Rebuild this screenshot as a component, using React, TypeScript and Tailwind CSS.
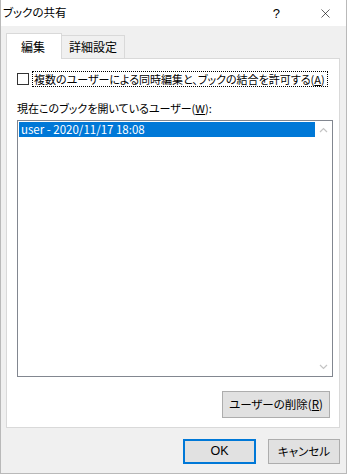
import { X } from "lucide-react";

const font = "font-['Meiryo_UI','Noto_Sans_CJK_JP',sans-serif] [font-feature-settings:'palt']";

function Chevron({ up }: { up?: boolean }) {
  return (
    <svg width="9" height="6" viewBox="0 0 9 6" className="block">
      <path
        d={up ? "M1 5 L4.5 1.5 L8 5" : "M1 1 L4.5 4.5 L8 1"}
        fill="none"
        stroke="#c4c4c4"
        strokeWidth="1.2"
      />
    </svg>
  );
}

export default function App() {
  return (
    <div className={`${font} w-[347px] h-[474px] bg-[#f0f0f0] border border-t-0 border-[#b9b9b9] text-[11px] leading-none text-black flex flex-col`}>
      {/* title bar */}
      <div className="h-[26px] bg-white flex items-center shrink-0">
        <span className="pl-[2px] text-[11.5px]">ブックの共有</span>
        <span className="ml-auto mr-[38px] text-[13px] font-['Liberation_Sans',sans-serif]">?</span>
        <X className="mr-[13px] size-[15px]" strokeWidth={1} />
      </div>

      <div className="flex flex-col px-[5px] pt-[7px] grow">
        {/* tabs */}
        <div className="flex items-end h-[25px] relative z-10">
          <div className="w-[56px] h-[26px] -mb-px bg-white border border-b-0 border-[#d9d9d9] flex items-center justify-center pr-[2px] text-[12px]">
            編集
          </div>
          <div className="w-[63px] h-[23px] border border-l-0 border-b-0 border-[#d9d9d9] flex items-center justify-center text-[12px]">
            詳細設定
          </div>
        </div>

        {/* panel */}
        <div className="w-[334px] h-[370px] bg-white border border-[#d9d9d9] flex flex-col px-[10px]">
          <div className="flex items-center mt-[12px]">
            <div className="size-[12px] border border-[#333] bg-white shrink-0" />
            <div className="ml-[3px] h-[16px] border border-dotted border-black flex items-center pl-[1px] pr-[2px] whitespace-nowrap text-[11px]">
              複数のユーザーによる同時編集と、ブックの結合を許可する(<span className="underline">A</span>)
            </div>
          </div>

          <div className="mt-[16px] whitespace-nowrap">
            現在このブックを開いているユーザー(<span className="underline">W</span>):
          </div>

          <div className="mt-[6px] w-[316px] h-[257px] border border-[#828790] flex">
            <div className="grow pt-px pl-px">
              <div className="h-[15px] bg-[#0078d7] text-white flex items-center pl-[2px] text-[11.5px]">
                user - 2020/11/17 18:08
              </div>
            </div>
            <div className="w-[17px] flex flex-col items-center justify-between py-[6px]">
              <Chevron up />
              <Chevron />
            </div>
          </div>

          <div className="flex justify-end mt-[14px]">
            <button className="w-[108px] h-[27px] mr-[-1px] bg-[#e1e1e1] border border-[#adadad] flex items-center justify-center text-[11.5px]">
              ユーザーの削除(<span className="underline">R</span>)
            </button>
          </div>
        </div>

        {/* footer buttons */}
        <div className="flex justify-end mt-[11px] pr-px">
          <button className="w-[73px] h-[25px] bg-[#e1e1e1] border-2 border-[#0078d7] flex items-center justify-center font-['Liberation_Sans',sans-serif] text-[12.5px]">
            OK
          </button>
          <button className="w-[72px] h-[25px] ml-[12px] bg-[#e1e1e1] border border-[#adadad] flex items-center justify-center text-[11.5px]">
            キャンセル
          </button>
        </div>
      </div>
    </div>
  );
}
